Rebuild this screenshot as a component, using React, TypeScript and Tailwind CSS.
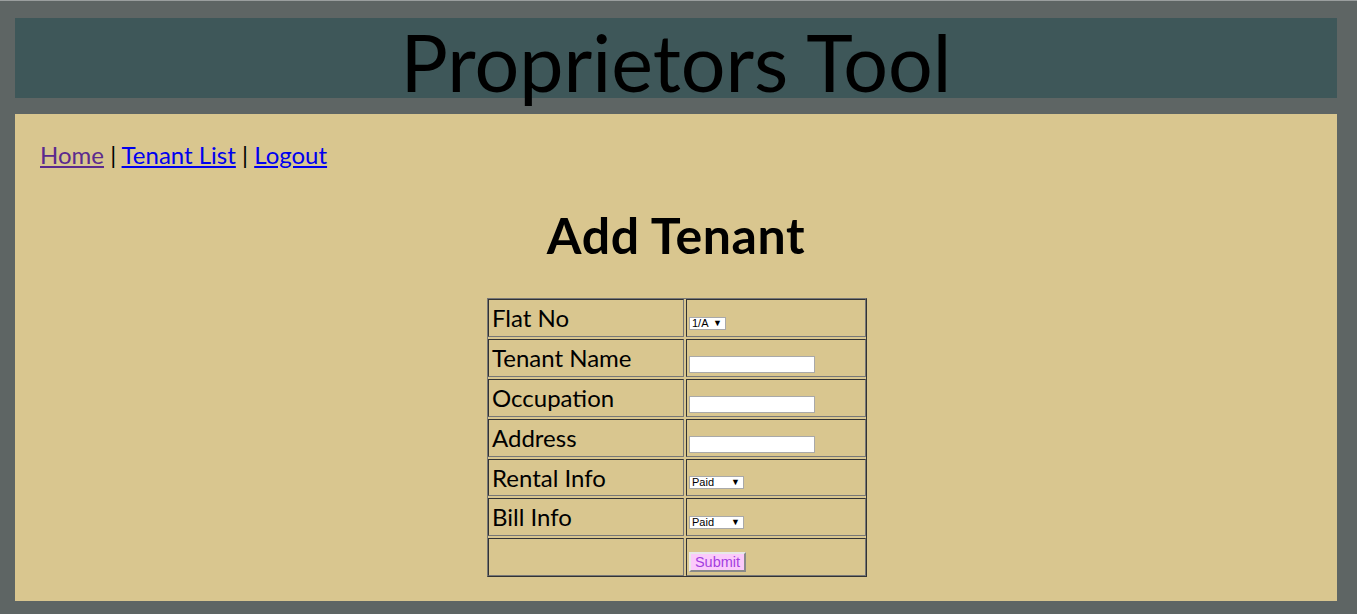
import React from 'react';

const rows: Array<{ label: string; field: 'flat' | 'text' | 'paid' | 'submit' }> = [
  { label: 'Flat No', field: 'flat' },
  { label: 'Tenant Name', field: 'text' },
  { label: 'Occupation', field: 'text' },
  { label: 'Address', field: 'text' },
  { label: 'Rental Info', field: 'paid' },
  { label: 'Bill Info', field: 'paid' },
  { label: '', field: 'submit' },
];

const cell =
  'h-[37.9px] border border-t-[#333] border-l-[#333] border-b-[#777] border-r-[#777]';

function FakeSelect({ value, width }: { value: string; width: string }) {
  return (
    <div
      className={`${width} h-[13px] bg-white border border-[#a9a9a9] flex items-center justify-between pl-[2px] pr-[3px] text-[11px] leading-none text-black`}
      style={{ fontFamily: '"Liberation Sans", Arial, sans-serif' }}
    >
      <span>{value}</span>
      <span className="text-[9px]">▼</span>
    </div>
  );
}

function Field({ field }: { field: string }) {
  if (field === 'flat') {
    return (
      <div className="pb-[6px]">
        <FakeSelect value="1/A" width="w-[37px]" />
      </div>
    );
  }
  if (field === 'paid') {
    return (
      <div className="pb-[6px]">
        <FakeSelect value="Paid" width="w-[55px]" />
      </div>
    );
  }
  if (field === 'text') {
    return (
      <div className="pb-[3px]">
        <input
          type="text"
          className="block w-[126px] h-[17px] bg-white border border-[#a9a9a9] outline-none"
        />
      </div>
    );
  }
  return (
    <div className="pb-[3px]">
      <button
        className="block w-[57px] h-[20px] bg-[#fbcafb] text-[#a43ee0] text-[14.5px] leading-none border-2 border-t-[#e8e8e8] border-l-[#e8e8e8] border-b-[#8a8a8a] border-r-[#8a8a8a]"
        style={{ fontFamily: '"Liberation Sans", Arial, sans-serif' }}
      >
        Submit
      </button>
    </div>
  );
}

export default function App() {
  return (
    <div
      className="min-h-[614px] bg-[#5e6564] border-t border-[#9a9e9e] pl-[15px] pr-[20px] pt-[17px] pb-[13px]"
      style={{ fontFamily: 'Lato, "Noto Sans", sans-serif' }}
    >
      {/* Header */}
      <div className="h-[80px] bg-[#3e5759] pt-[4px] text-center">
        <h1 className="text-[79px] leading-[80px] text-black">Proprietors Tool</h1>
      </div>

      {/* Content */}
      <div className="mt-[16px] bg-[#d9c68f] h-[487px] px-[25px] pt-[25px]">
        <nav className="text-[24px] leading-[32px] text-black">
          <a href="#" className="underline text-[#5b2a8e]">Home</a>
          {' | '}
          <a href="#" className="underline text-[#0000ee]">Tenant List</a>
          {' | '}
          <a href="#" className="underline text-[#0000ee]">Logout</a>
        </nav>

        <h2 className="mt-[32px] text-center text-[50px] leading-[64px] tracking-[0.6px] font-bold text-black">
          Add Tenant
        </h2>

        {/* Form table */}
        <div className="mt-[31px] flex justify-center pl-[2px]">
          <div className="w-[380px] grid grid-cols-[196px_180px] gap-[2px] border border-t-[#777] border-l-[#777] border-b-[#333] border-r-[#333]">
            {rows.map((r, i) => (
              <React.Fragment key={i}>
                <div className={`${cell} flex items-center pl-[3px] text-[24px] leading-[32px] text-black`}>
                  {r.label}
                </div>
                <div className={`${cell} flex items-end pl-[2px]`}>
                  <Field field={r.field} />
                </div>
              </React.Fragment>
            ))}
          </div>
        </div>
      </div>
    </div>
  );
}
